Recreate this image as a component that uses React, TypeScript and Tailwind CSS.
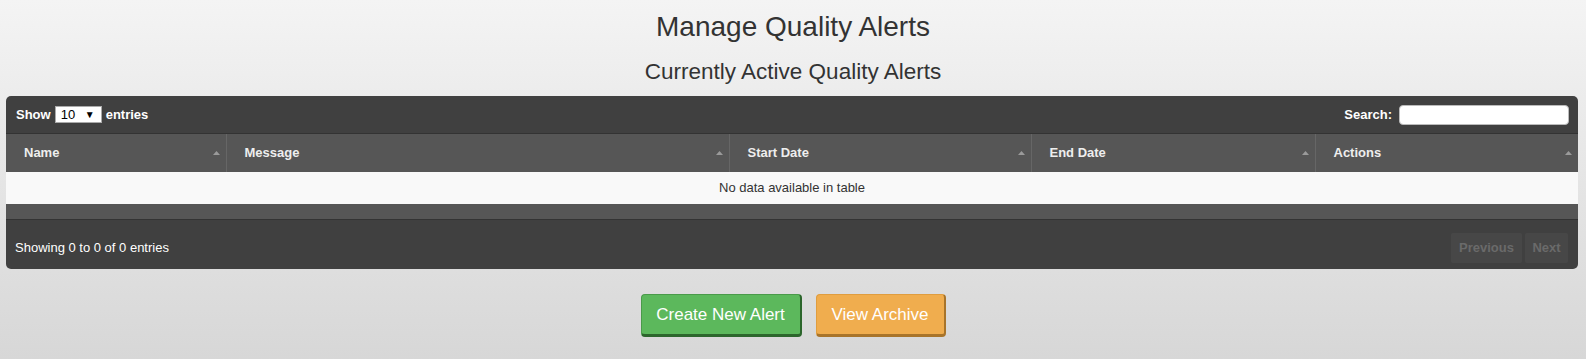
import React from "react";

type Column = { key: string; label: string; width: number };

const columns: Column[] = [
  { key: "name", label: "Name", width: 220 },
  { key: "message", label: "Message", width: 503 },
  { key: "start", label: "Start Date", width: 302 },
  { key: "end", label: "End Date", width: 284 },
  { key: "actions", label: "Actions", width: 263 },
];

function SortCaret() {
  return (
    <svg width="7" height="4" viewBox="0 0 7 4" className="shrink-0">
      <path d="M0 4 L3.5 0 L7 4 Z" fill="#9a9a9a" />
    </svg>
  );
}

export default function App() {
  return (
    <div className="min-h-[359px] w-full bg-gradient-to-b from-[#f4f4f4] to-[#d7d7d7] pb-[22px] font-['Liberation_Sans',Arial,sans-serif]">
      <h1 className="pt-[11px] text-center text-[28px] leading-[32px] text-[#333]">
        Manage Quality Alerts
      </h1>
      <h2 className="mt-[16px] text-center text-[22.5px] leading-[26px] text-[#333]">
        Currently Active Quality Alerts
      </h2>

      <div className="mt-[11px] ml-[6px] mr-[8px] overflow-hidden rounded-[5px] bg-[#404040]">
        <div className="flex h-[38px] items-center justify-between border-b border-[#333] pl-[10px] pr-[9px]">
          <div className="flex items-center text-[13px] font-bold text-white">
            <span>Show</span>
            <div className="mx-[4px] flex h-[17px] w-[47px] items-center justify-between border border-[#aaa] bg-white pl-[5px] pr-[6px] text-[13px] font-normal leading-none text-black">
              <span>10</span>
              <span className="text-[10px]">▼</span>
            </div>
            <span>entries</span>
          </div>
          <label className="flex items-center text-[13px] font-bold text-white">
            Search:
            <input
              type="text"
              className="ml-[7px] h-[20px] w-[170px] rounded-[4px] border border-[#bbb] bg-white"
            />
          </label>
        </div>

        <table className="w-full table-fixed border-collapse">
          <colgroup>
            {columns.map((column) => (
              <col key={column.key} style={{ width: column.width }} />
            ))}
          </colgroup>
          <thead>
            <tr className="h-[38px] bg-[#565656]">
              {columns.map((column, index) => (
                <th
                  key={column.key}
                  className={`p-0 text-left text-[13px] font-bold text-[#eeeeee] ${
                    index > 0 ? "border-l border-[#666]" : ""
                  }`}
                >
                  <div className="flex items-center justify-between pl-[18px] pr-[6px]">
                    <span>{column.label}</span>
                    <SortCaret />
                  </div>
                </th>
              ))}
            </tr>
          </thead>
          <tbody>
            <tr className="h-[32px] bg-[#f9f9f9]">
              <td
                colSpan={columns.length}
                className="text-center text-[13px] text-[#333]"
              >
                No data available in table
              </td>
            </tr>
          </tbody>
        </table>

        <div className="h-[16px] border-b border-[#333] bg-[#565656]" />

        <div className="flex h-[49px] items-center justify-between pt-[6px] pl-[9px] pr-[10px]">
          <span className="text-[13px] text-white">
            Showing 0 to 0 of 0 entries
          </span>
          <div className="flex gap-[3px] text-[13px] font-bold text-[#6a6a6a]">
            <span className="flex h-[30px] w-[71px] items-center justify-center rounded-[2px] bg-[#474747]">
              Previous
            </span>
            <span className="flex h-[30px] w-[43px] items-center justify-center rounded-[2px] bg-[#474747]">
              Next
            </span>
          </div>
        </div>
      </div>

      <div className="mt-[25px] flex justify-center gap-[14px]">
        <button
          type="button"
          className="h-[43px] w-[161px] rounded-[4px] border border-b-[3px] border-r-[2px] border-[#4a9a4a] border-b-[#2c662c] border-r-[#2c662c] bg-[#5cb85c] text-[17px] text-white"
        >
          Create New Alert
        </button>
        <button
          type="button"
          className="h-[43px] w-[130px] rounded-[4px] border border-b-[3px] border-r-[2px] border-[#e09d3e] border-b-[#a8742a] border-r-[#a8742a] bg-[#f0ad4e] text-[17px] text-white"
        >
          View Archive
        </button>
      </div>
    </div>
  );
}
